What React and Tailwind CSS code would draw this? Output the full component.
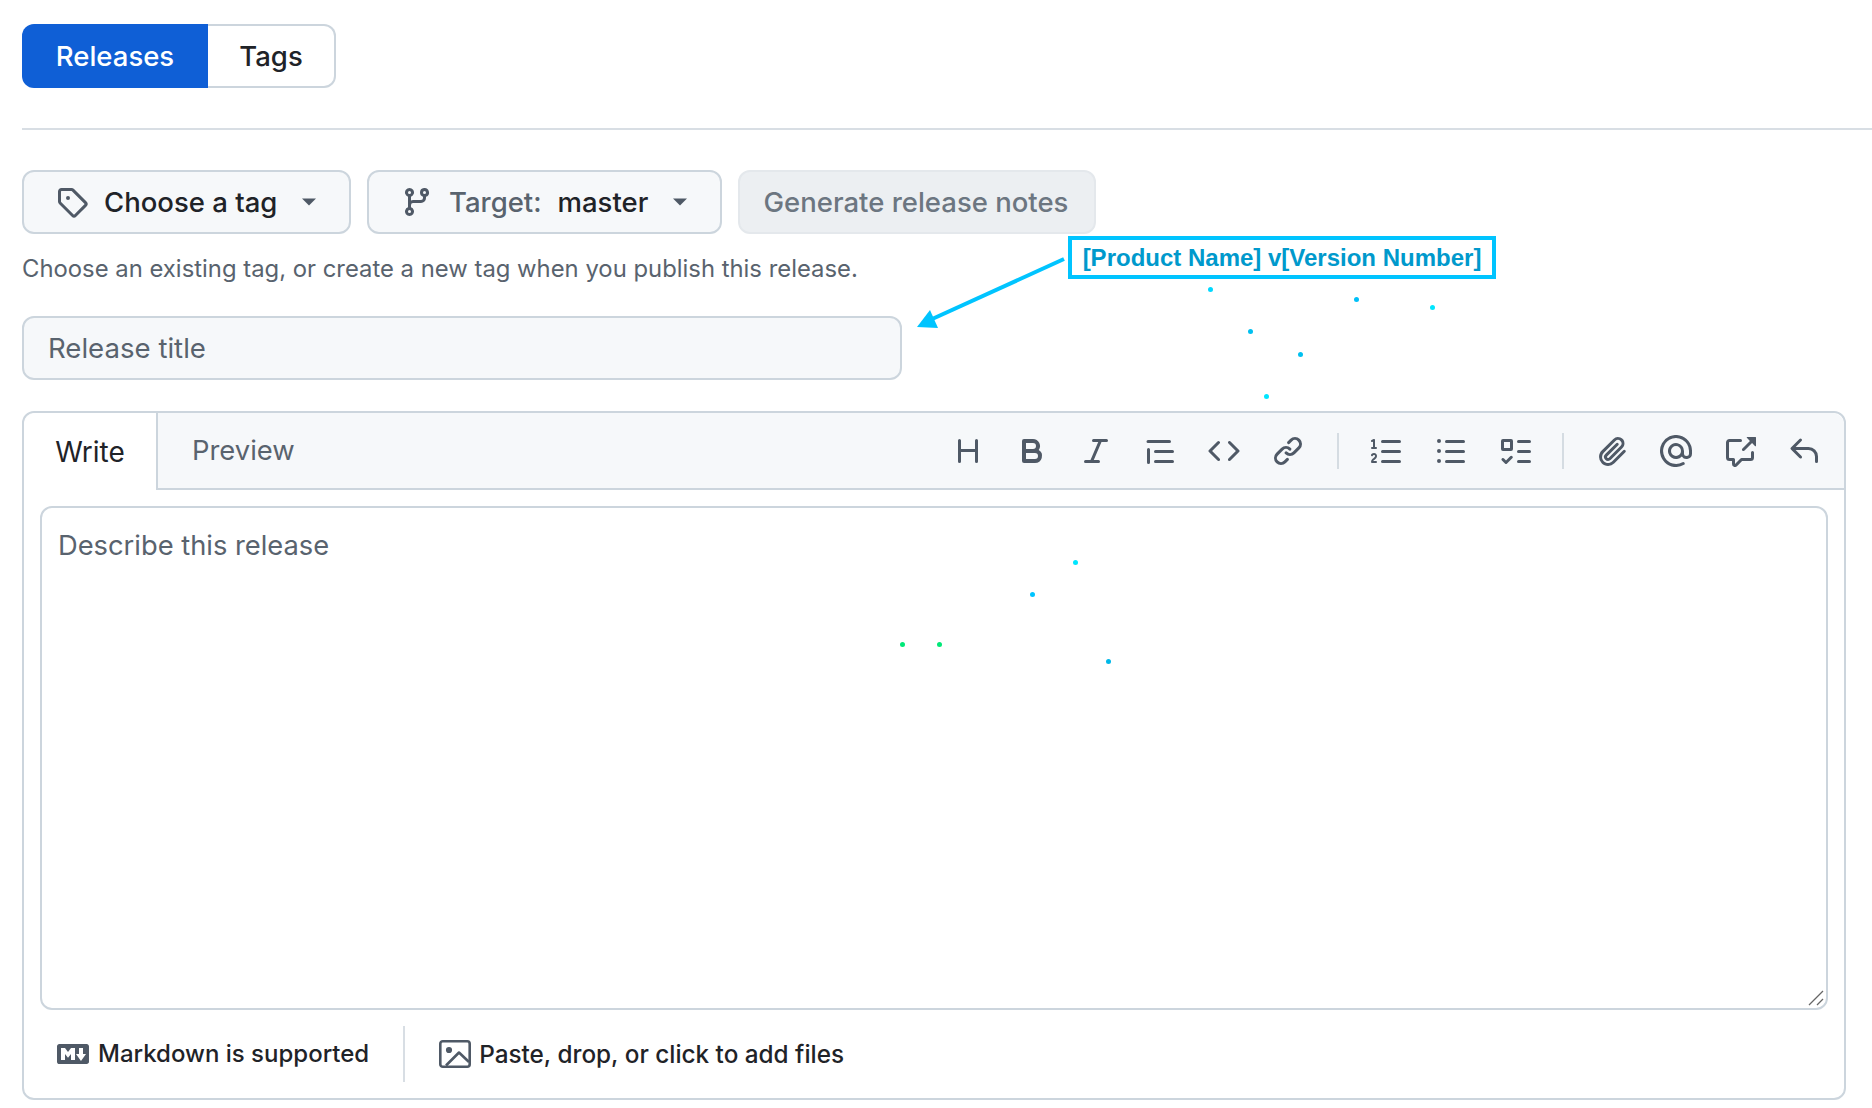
import React from "react";

const I = {
  heading: "M3.75 2a.75.75 0 0 1 .75.75V7h7V2.75a.75.75 0 0 1 1.5 0v10.5a.75.75 0 0 1-1.5 0V8.5h-7v4.75a.75.75 0 0 1-1.5 0V2.75A.75.75 0 0 1 3.75 2Z",
  bold: "M4 2h4.5a3.501 3.501 0 0 1 2.852 5.53A3.499 3.499 0 0 1 9.5 14H4a1 1 0 0 1-1-1V3a1 1 0 0 1 1-1Zm1 7v3h4.5a1.5 1.5 0 0 0 0-3Zm3.5-2a1.5 1.5 0 0 0 0-3H5v3Z",
  italic: "M6 2.75A.75.75 0 0 1 6.75 2h6.5a.75.75 0 0 1 0 1.5h-2.505l-3.858 9H9.25a.75.75 0 0 1 0 1.5h-6.5a.75.75 0 0 1 0-1.5h2.505l3.858-9H6.75A.75.75 0 0 1 6 2.75Z",
  quote: "M2 2.5h10.75a.75.75 0 0 1 0 1.5H2a.75.75 0 0 1 0-1.5Zm3.75 5h8.5a.75.75 0 0 1 0 1.5h-8.5a.75.75 0 0 1 0-1.5Zm0 5h8.5a.75.75 0 0 1 0 1.5h-8.5a.75.75 0 0 1 0-1.5ZM3 7.25v6.5a.75.75 0 0 1-1.5 0v-6.5a.75.75 0 0 1 1.5 0Z",
  code: "m11.28 3.22 4.25 4.25a.75.75 0 0 1 0 1.06l-4.25 4.25a.749.749 0 0 1-1.275-.326.749.749 0 0 1 .215-.734L13.94 8l-3.72-3.72a.749.749 0 0 1 .326-1.275.749.749 0 0 1 .734.215Zm-6.56 0a.751.751 0 0 1 1.042.018.751.751 0 0 1 .018 1.042L2.06 8l3.72 3.72a.749.749 0 0 1-.326 1.275.749.749 0 0 1-.734-.215L.47 8.53a.75.75 0 0 1 0-1.06Z",
  link: "m7.775 3.275 1.25-1.25a3.5 3.5 0 1 1 4.95 4.95l-2.5 2.5a3.5 3.5 0 0 1-4.95 0 .751.751 0 0 1 .018-1.042.751.751 0 0 1 1.042-.018 1.998 1.998 0 0 0 2.83 0l2.5-2.5a2.002 2.002 0 0 0-2.83-2.83l-1.25 1.25a.751.751 0 0 1-1.042-.018.751.751 0 0 1-.018-1.042Zm-4.69 9.64a1.998 1.998 0 0 0 2.83 0l1.25-1.25a.751.751 0 0 1 1.042.018.751.751 0 0 1 .018 1.042l-1.25 1.25a3.5 3.5 0 1 1-4.95-4.95l2.5-2.5a3.5 3.5 0 0 1 4.95 0 .751.751 0 0 1-.018 1.042.751.751 0 0 1-1.042.018 1.998 1.998 0 0 0-2.83 0l-2.5 2.5a1.998 1.998 0 0 0 0 2.83Z",
  ol: "M5 3.25a.75.75 0 0 1 .75-.75h8.5a.75.75 0 0 1 0 1.5h-8.5A.75.75 0 0 1 5 3.25Zm0 5a.75.75 0 0 1 .75-.75h8.5a.75.75 0 0 1 0 1.5h-8.5A.75.75 0 0 1 5 8.25Zm0 5a.75.75 0 0 1 .75-.75h8.5a.75.75 0 0 1 0 1.5h-8.5a.75.75 0 0 1-.75-.75ZM.924 10.32a.5.5 0 0 1-.851-.525l.001-.001.001-.002.002-.004.007-.011c.097-.144.215-.273.348-.384.228-.19.588-.392 1.068-.392.468 0 .858.181 1.126.484.259.294.377.673.377 1.038 0 .987-.686 1.495-1.156 1.845l-.047.035c-.303.225-.522.4-.654.597h1.357a.5.5 0 0 1 0 1H.5a.5.5 0 0 1-.5-.5c0-1.005.692-1.52 1.167-1.875l.035-.025c.531-.396.8-.625.8-1.078a.57.57 0 0 0-.128-.376C1.806 10.068 1.695 10 1.5 10a.658.658 0 0 0-.429.163.835.835 0 0 0-.144.153ZM2.003 2.5V6h.503a.5.5 0 0 1 0 1H.5a.5.5 0 0 1 0-1h.503V3.308l-.28.14a.5.5 0 0 1-.446-.895l1.003-.5a.5.5 0 0 1 .723.447Z",
  ul: "M5.75 2.5h8.5a.75.75 0 0 1 0 1.5h-8.5a.75.75 0 0 1 0-1.5Zm0 5h8.5a.75.75 0 0 1 0 1.5h-8.5a.75.75 0 0 1 0-1.5Zm0 5h8.5a.75.75 0 0 1 0 1.5h-8.5a.75.75 0 0 1 0-1.5ZM2 14a1 1 0 1 1 0-2 1 1 0 0 1 0 2Zm1-6a1 1 0 1 1-2 0 1 1 0 0 1 2 0ZM2 4a1 1 0 1 1 0-2 1 1 0 0 1 0 2Z",
  task: "M2 2h4a1 1 0 0 1 1 1v4a1 1 0 0 1-1 1H2a1 1 0 0 1-1-1V3a1 1 0 0 1 1-1Zm4.655 8.595a.75.75 0 0 1 0 1.06L4.03 14.28a.75.75 0 0 1-1.06 0l-1.5-1.5a.749.749 0 0 1 .326-1.275.749.749 0 0 1 .734.215l.97.97 2.095-2.095a.75.75 0 0 1 1.06 0ZM9.75 2.5h5.5a.75.75 0 0 1 0 1.5h-5.5a.75.75 0 0 1 0-1.5Zm0 5h5.5a.75.75 0 0 1 0 1.5h-5.5a.75.75 0 0 1 0-1.5Zm0 5h5.5a.75.75 0 0 1 0 1.5h-5.5a.75.75 0 0 1 0-1.5Zm-7.25-9v3h3v-3Z",
  clip: "M12.212 3.02a1.753 1.753 0 0 0-2.478.003l-5.83 5.83a3.007 3.007 0 0 0-.88 2.127c0 .795.315 1.551.88 2.116.567.567 1.333.89 2.126.89.79 0 1.548-.321 2.116-.89l5.48-5.48a.75.75 0 0 1 1.061 1.06l-5.48 5.48a4.492 4.492 0 0 1-3.177 1.33c-1.2 0-2.345-.487-3.187-1.33a4.483 4.483 0 0 1-1.32-3.177c0-1.195.475-2.341 1.32-3.186l5.83-5.83a3.25 3.25 0 0 1 5.553 2.297c0 .863-.343 1.691-.953 2.301L7.439 12.39c-.375.377-.884.59-1.416.593a1.998 1.998 0 0 1-1.412-.593 1.992 1.992 0 0 1 0-2.828l5.48-5.48a.751.751 0 0 1 1.042.018.751.751 0 0 1 .018 1.042l-5.48 5.48a.492.492 0 0 0 0 .707.499.499 0 0 0 .352.154.51.51 0 0 0 .356-.154l5.833-5.827a1.755 1.755 0 0 0 0-2.481Z",
  at: "M4.75 2.37a6.501 6.501 0 0 0 6.5 11.26.75.75 0 0 1 .75 1.298A7.999 7.999 0 0 1 .989 4.148 8 8 0 0 1 16 7.75v1.5a2.75 2.75 0 0 1-5.072 1.475 3.999 3.999 0 0 1-6.65-4.19A4 4 0 0 1 12 8v1.25a1.25 1.25 0 0 0 2.5 0V7.867a6.5 6.5 0 0 0-9.75-5.496ZM10.5 8a2.5 2.5 0 1 0-5 0 2.5 2.5 0 0 0 5 0Z",
  xref: "M2.75 3.5a.25.25 0 0 0-.25.25v7.5c0 .138.112.25.25.25h2a.75.75 0 0 1 .75.75v2.19l2.72-2.72a.749.749 0 0 1 .53-.22h4.5a.25.25 0 0 0 .25-.25v-2.5a.75.75 0 0 1 1.5 0v2.5A1.75 1.75 0 0 1 13.25 13H9.06l-2.573 2.573A1.458 1.458 0 0 1 4 14.543V13H2.75A1.75 1.75 0 0 1 1 11.25v-7.5C1 2.784 1.784 2 2.75 2h5.5a.75.75 0 0 1 0 1.5ZM16 1.25v4.146a.25.25 0 0 1-.427.177L14.03 4.03l-3.75 3.75a.749.749 0 0 1-1.275-.326.749.749 0 0 1 .215-.734l3.75-3.75-1.543-1.543A.25.25 0 0 1 11.604 1h4.146a.25.25 0 0 1 .25.25Z",
  reply: "M6.78 1.97a.75.75 0 0 1 0 1.06L3.81 6h6.44A4.75 4.75 0 0 1 15 10.75v2.5a.75.75 0 0 1-1.5 0v-2.5a3.25 3.25 0 0 0-3.25-3.25H3.81l2.97 2.97a.749.749 0 0 1-.326 1.275.749.749 0 0 1-.734-.215L1.47 7.28a.75.75 0 0 1 0-1.06l4.25-4.25a.75.75 0 0 1 1.06 0Z",
  tag: "M1 7.775V2.75C1 1.784 1.784 1 2.75 1h5.025c.464 0 .91.184 1.238.513l6.25 6.25a1.75 1.75 0 0 1 0 2.474l-5.026 5.026a1.75 1.75 0 0 1-2.474 0l-6.25-6.25A1.752 1.752 0 0 1 1 7.775Zm1.5 0c0 .066.026.13.073.177l6.25 6.25a.25.25 0 0 0 .354 0l5.025-5.025a.25.25 0 0 0 0-.354l-6.25-6.25a.25.25 0 0 0-.177-.073H2.75a.25.25 0 0 0-.25.25ZM6 5a1 1 0 1 1 0 2 1 1 0 0 1 0-2Z",
  branch: "M9.5 3.25a2.25 2.25 0 1 1 3 2.122V6A2.5 2.5 0 0 1 10 8.5H6a1 1 0 0 0-1 1v1.128a2.251 2.251 0 1 1-1.5 0V5.372a2.25 2.25 0 1 1 1.5 0v1.836A2.493 2.493 0 0 1 6 7h4a1 1 0 0 0 1-1v-.628A2.25 2.25 0 0 1 9.5 3.25Zm-6 0a.75.75 0 1 0 1.5 0 .75.75 0 0 0-1.5 0Zm8.25-.75a.75.75 0 1 0 0 1.5.75.75 0 0 0 0-1.5ZM4.25 12a.75.75 0 1 0 0 1.5.75.75 0 0 0 0-1.5Z",
  md: "M14.85 3c.63 0 1.15.52 1.14 1.15v7.7c0 .63-.51 1.15-1.15 1.15H1.15C.52 13 0 12.48 0 11.84V4.15C0 3.52.52 3 1.15 3ZM9 11V5H7L5.5 7 4 5H2v6h2V8l1.5 1.92L7 8v3Zm2.99.5L14.5 8H13V5h-2v3H9.5Z",
};

const Oct = ({ d, className = "" }) => (
  <svg width="32" height="32" viewBox="0 0 16 16" fill="currentColor" className={`shrink-0 text-[#4f5966] ${className}`}>
    <path d={d} />
  </svg>
);

const Caret = () => (
  <svg width="16" height="8" viewBox="0 0 16 8" className="shrink-0 text-[#4f5966]" fill="currentColor">
    <path d="M1 0.5 H15 L8 7.5 Z" />
  </svg>
);

const ImageIcon = () => (
  <svg width="32" height="32" viewBox="0 0 32 32" fill="none" stroke="#4f5966" strokeWidth="2.6" strokeLinejoin="round" className="shrink-0 ml-[34px]">
    <rect x="1.3" y="3.3" width="29.4" height="25.4" rx="2.5" />
    <circle cx="10" cy="12" r="2.2" fill="#4f5966" strokeWidth="1.8" />
    <path d="M7 27.5 L20 14.5 L30 24" />
  </svg>
);

const Tool = ({ name }) => (
  <div className="w-16 h-8 flex items-center justify-center">
    <Oct d={I[name]} />
  </div>
);

const Sep = () => <div className="w-[2px] h-9 bg-[#d5dce2] mx-[-1px]" />;

const dots = [
  ["left-[1208px] top-[287px]", "bg-[#00d8ff]"],
  ["left-[1354px] top-[297px]", "bg-[#00c0f8]"],
  ["left-[1430px] top-[305px]", "bg-[#00e6ff]"],
  ["left-[1248px] top-[329px]", "bg-[#00c0f0]"],
  ["left-[1298px] top-[352px]", "bg-[#00c0f0]"],
  ["left-[1264px] top-[394px]", "bg-[#00e6ff]"],
  ["left-[1073px] top-[560px]", "bg-[#00e6ff]"],
  ["left-[1030px] top-[592px]", "bg-[#00c4ff]"],
  ["left-[900px] top-[642px]", "bg-[#00e878]"],
  ["left-[937px] top-[642px]", "bg-[#00e878]"],
  ["left-[1106px] top-[659px]", "bg-[#00b8e8]"],
];

export default function App() {
  return (
    <div className="relative w-[1872px] h-[1108px] overflow-hidden bg-white pt-6 font-['Inter',sans-serif] text-[#1f2328]">
      <div className="ml-[22px] flex w-[314px] h-16 text-[27.5px] font-medium">
        <div className="w-[186px] bg-[#0f5fd6] text-white rounded-l-xl flex items-center justify-center pt-px">Releases</div>
        <div className="w-[128px] border-2 border-l-0 border-[#ccd5dd] rounded-r-xl flex items-center justify-center pt-px">Tags</div>
      </div>

      <div className="ml-[22px] mt-10 h-[2px] bg-[#d8dee4]" />

      <div className="ml-[22px] mt-10 flex gap-4 h-16 text-[27.5px] font-medium">
        <div className="w-[329px] flex items-center bg-[#f6f8fa] border-2 border-[#ccd5dd] rounded-xl pl-8">
          <Oct d={I.tag} className="mr-4" />
          <span className="pt-px">Choose a tag</span>
          <span className="ml-6"><Caret /></span>
        </div>
        <div className="w-[355px] flex items-center bg-[#f6f8fa] border-2 border-[#ccd5dd] rounded-xl pl-8">
          <Oct d={I.branch} className="mr-4" />
          <span className="pt-px text-[#59636e]">Target:</span>
          <span className="ml-4 pt-px">master</span>
          <span className="ml-6"><Caret /></span>
        </div>
        <div className="w-[358px] flex items-center justify-center bg-[#eceff2] border-2 border-[#e4e8ec] rounded-xl pt-px pr-[2px] text-[#6c7681]">
          Generate release notes
        </div>
      </div>

      <p className="ml-[22px] mt-[18px] h-[34px] leading-[34px] text-[23.85px] text-[#59636e]">
        Choose an existing tag, or create a new tag when you publish this release.
      </p>

      <div className="ml-[22px] mt-[30px] w-[880px] h-16 flex items-center bg-[#f6f8fa] border-2 border-[#ccd5dd] rounded-xl pl-6 pt-px text-[27.6px] text-[#59636e]">
        Release title
      </div>

      <div className="ml-[22px] mt-[31px] w-[1824px] h-[689px] border-2 border-[#ccd5dd] rounded-xl flex flex-col">
        <div className="h-[77px] flex shrink-0 bg-[#f6f8fa] rounded-t-xl border-b-2 border-[#ccd5dd]">
          <div className="w-[134px] h-[77px] bg-white border-r-2 border-[#ccd5dd] rounded-tl-xl flex items-center justify-center text-[28px]">Write</div>
          <div className="pl-[34px] pt-px flex items-center text-[27.4px] text-[#59636e]">Preview</div>
          <div className="ml-auto mr-[8px] flex items-center">
            <Tool name="heading" />
            <Tool name="bold" />
            <Tool name="italic" />
            <Tool name="quote" />
            <Tool name="code" />
            <Tool name="link" />
            <div className="w-[18px]" /><Sep /><div className="w-[17px]" />
            <Tool name="ol" />
            <Tool name="ul" />
            <Tool name="task" />
            <div className="w-[16px]" /><Sep /><div className="w-[17px]" />
            <Tool name="clip" />
            <Tool name="at" />
            <Tool name="xref" />
            <Tool name="reply" />
          </div>
        </div>
        <div className="relative mx-4 mt-4 h-[504px] shrink-0 border-2 border-[#ccd5dd] rounded-xl px-4 pt-5 text-[27.3px] leading-[36px] text-[#59636e]">
          Describe this release
          <svg width="16" height="16" viewBox="0 0 16 16" className="absolute right-[2px] bottom-[2px]" stroke="#666" strokeWidth="1.3">
            <path d="M1 15 L15 1 M9 15 L15 9" />
          </svg>
        </div>
        <div className="flex-1 flex items-center pl-[33px] text-[24px] font-medium">
          <Oct d={I.md} />
          <span className="ml-[9px]">Markdown is supported</span>
          <div className="ml-[34px] w-[2px] h-14 bg-[#d8dee4]" />
          <ImageIcon />
          <span className="ml-2 text-[24.3px]">Paste, drop, or click to add files</span>
        </div>
      </div>

      {/* annotation */}
      <div className="absolute left-[1068px] top-[236px] w-[428px] h-[43px] border-4 border-[#00c4ff] flex items-center justify-center font-['Liberation_Sans',sans-serif] font-bold text-[24px] text-[#0099cc]">
        [Product Name] v[Version Number]
      </div>
      <svg className="absolute left-[910px] top-[250px]" width="160" height="85" viewBox="0 0 160 85">
        <path d="M20 70 L154 9" stroke="#00c4ff" strokeWidth="4" />
        <path d="M7 77 L20 60 L28 78 Z" fill="#00c4ff" />
      </svg>
      {dots.map(([pos, c], i) => (
        <div key={i} className={`absolute w-[5px] h-[5px] rounded-full ${pos} ${c}`} />
      ))}
    </div>
  );
}
